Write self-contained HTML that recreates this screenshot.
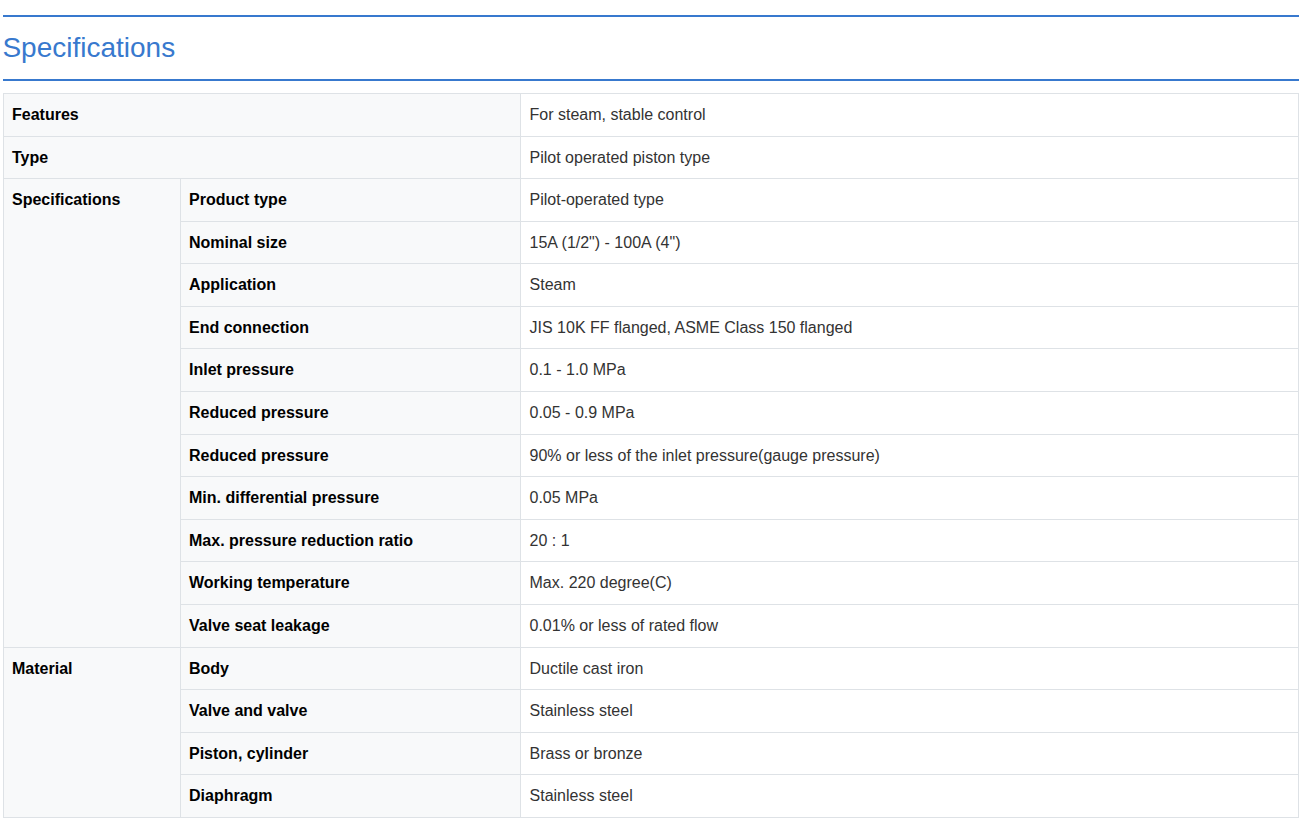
<!DOCTYPE html>
<html lang="en">
<head>
<meta charset="utf-8">
<title>Specifications</title>
<style>
html,body{margin:0;padding:0;background:#fff;}
body{width:1305px;height:829px;overflow:hidden;font-family:"Liberation Sans",Arial,Helvetica,sans-serif;font-size:16px;line-height:1.6;color:#333;}
.wrap{position:absolute;left:3px;top:15px;width:1296px;}
h2{margin:0;box-sizing:border-box;height:66px;border-top:2px solid #3879ce;border-bottom:2px solid #3879ce;font-weight:normal;font-size:28px;line-height:62px;color:#3879ce;padding:0;}
h2 span{position:relative;top:0px;left:-0.6px;}
table{border-collapse:collapse;width:1295px;margin-top:12px;table-layout:fixed;}
th,td{border:1px solid #dee2e6;padding:8px 8px 0;text-align:left;vertical-align:top;line-height:26px;}
th{background:#f8f9fa;color:#000;font-weight:bold;}
td{background:#fff;color:#333;padding-left:8.5px;}
</style>
</head>
<body>
<div class="wrap">
<h2><span>Specifications</span></h2>
<table>
<colgroup><col style="width:177px"><col style="width:340px"><col style="width:778px"></colgroup>
<tbody>
<tr style="height:43px"><th colspan="2">Features</th><td>For steam, stable control</td></tr>
<tr style="height:42px"><th colspan="2">Type</th><td>Pilot operated piston type</td></tr>
<tr style="height:43px"><th rowspan="11">Specifications</th><th>Product type</th><td>Pilot-operated type</td></tr>
<tr style="height:42px"><th>Nominal size</th><td>15A (1/2") - 100A (4")</td></tr>
<tr style="height:43px"><th>Application</th><td>Steam</td></tr>
<tr style="height:42px"><th>End connection</th><td>JIS 10K FF flanged, ASME Class 150 flanged</td></tr>
<tr style="height:43px"><th>Inlet pressure</th><td>0.1 - 1.0 MPa</td></tr>
<tr style="height:43px"><th>Reduced pressure</th><td>0.05 - 0.9 MPa</td></tr>
<tr style="height:42px"><th>Reduced pressure</th><td>90% or less of the inlet pressure(gauge pressure)</td></tr>
<tr style="height:43px"><th>Min. differential pressure</th><td>0.05 MPa</td></tr>
<tr style="height:42px"><th>Max. pressure reduction ratio</th><td>20 : 1</td></tr>
<tr style="height:43px"><th>Working temperature</th><td>Max. 220 degree(C)</td></tr>
<tr style="height:43px"><th>Valve seat leakage</th><td>0.01% or less of rated flow</td></tr>
<tr style="height:42px"><th rowspan="4">Material</th><th>Body</th><td>Ductile cast iron</td></tr>
<tr style="height:43px"><th>Valve and valve</th><td>Stainless steel</td></tr>
<tr style="height:42px"><th>Piston, cylinder</th><td>Brass or bronze</td></tr>
<tr style="height:43px"><th>Diaphragm</th><td>Stainless steel</td></tr>
</tbody>
</table>
</div>
</body>
</html>
